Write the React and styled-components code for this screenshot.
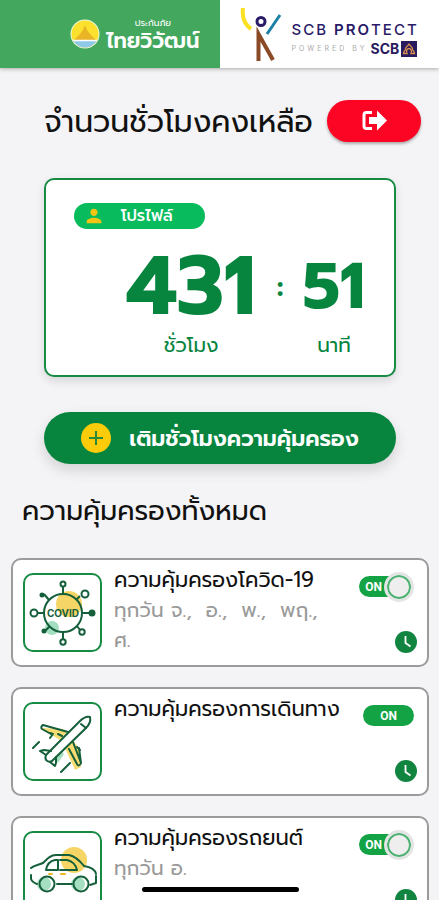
import React, { useState } from 'react';
import styled, { createGlobalStyle } from 'styled-components';
import { MdPerson } from 'react-icons/md';

const policies = [
  { id: 'covid', title: 'ความคุ้มครองโควิด-19', days: ['ทุกวัน จ.,', 'อ.,', 'พ.,', 'พฤ.,', 'ศ.'], knob: true },
  { id: 'travel', title: 'ความคุ้มครองการเดินทาง', days: [], knob: false },
  { id: 'car', title: 'ความคุ้มครองรถยนต์', days: ['ทุกวัน อ.'], knob: true },
];

const SunLogo = () => (
  <svg width="30" height="30" viewBox="0 0 30 30" aria-hidden="true">
    <clipPath id="sun"><circle cx="15" cy="15" r="13.5" /></clipPath>
    <circle cx="15" cy="15" r="14.5" fill="#e9f6dc" />
    <g clipPath="url(#sun)">
      <rect width="30" height="30" fill="#fbe02e" />
      <path d="M15 6l2 5 3 4 7 7H3l7-7 3-4z" fill="#e9b526" />
      <rect y="21.5" width="30" height="9" fill="#8fc9ea" />
      <path d="M0 21.5h30" stroke="#fff" strokeWidth="1.5" />
    </g>
  </svg>
);

const ProtectLogo = () => (
  <svg width="42" height="56" viewBox="0 0 42 56" fill="none" aria-hidden="true">
    <path d="M3 2c-1 8 1 16 8 21" stroke="#fbe122" strokeWidth="4" />
    <circle cx="21" cy="15.5" r="4" stroke="#2a1a68" strokeWidth="3" />
    <path d="M40 9L27 28" stroke="#1b7fa6" strokeWidth="3" />
    <path d="M18.500 55V28L33 54" stroke="#8a4a26" strokeWidth="4" />
  </svg>
);

const ScbMark = () => (
  <svg width="16" height="16" viewBox="0 0 16 16" fill="none" aria-hidden="true">
    <rect width="16" height="16" fill="#2a1a5e" />
    <path d="M8 2.500C8 5 4.500 5 4.500 8c0 2-2 2-2 4.500h3.500c-1-3 0-5 2-5s3 2 2 5h3.500c0-2.500-2-2.500-2-4.500 0-3-3.500-3-3.500-5.500z" stroke="#d98f4e" strokeWidth="1.300" />
  </svg>
);

const LogoutIcon = () => (
  <svg width="28" height="24" viewBox="0 0 28 24" fill="none" aria-hidden="true">
    <path d="M12 3.500H6.500C5 3.500 4 4.500 4 6v11c0 1.500 1 2.500 2.500 2.500H12" stroke="#fff" strokeWidth="3" />
    <path d="M9 8h8V1.500L27 11.500l-10 10V15H9z" fill="#fff" />
  </svg>
);

const ClockIcon = () => (
  <svg width="22" height="22" viewBox="0 0 22 22" fill="none" aria-hidden="true">
    <circle cx="11" cy="11" r="11" fill="#118540" />
    <path d="M10.500 5v7l5 3.500" stroke="#fff" strokeWidth="1.800" />
  </svg>
);

const PlusIcon = () => (
  <svg width="30" height="30" viewBox="0 0 30 30" fill="none" aria-hidden="true">
    <circle cx="15" cy="15" r="15" fill="#fccb0a" />
    <path d="M15 8v14M8 15h14" stroke="#2c8a36" strokeWidth="2" />
  </svg>
);

const CovidIcon = () => (
  <svg width="75" height="75" viewBox="0 0 75 75" fill="none" stroke="#155f3b" strokeWidth="2">
    <circle cx="44" cy="29" r="13" fill="#f5d565" stroke="none" />
    <circle cx="27" cy="53" r="7" fill="#a5dfc2" stroke="none" />
    <circle cx="38" cy="38" r="19" />
    <path d="M38 19v-7M38 57v7M19 38h-6M57 38h7M24 25l-5-6M51 25l4-4M25 51l-5 5M52 51l3 4" />
    <circle cx="38" cy="9" r="2.500" />
    <circle cx="38" cy="67" r="2.700" />
    <circle cx="9" cy="38" r="3.500" />
    <circle cx="60" cy="19" r="3.500" />
    <circle cx="57" cy="57" r="2.700" />
    <circle cx="67" cy="38" r="2.500" fill="#155f3b" />
    <circle cx="17" cy="20" r="1.500" fill="#155f3b" />
    <circle cx="19" cy="56" r="1.500" fill="#155f3b" />
    <text x="38" y="42" textAnchor="middle" fontFamily="Inter, sans-serif" fontSize="10" fontWeight="700" fill="#155f3b" stroke="none">COVID</text>
  </svg>
);

const PlaneIcon = () => (
  <svg width="75" height="75" viewBox="0 0 75 75" fill="none" stroke="#155f3b" strokeWidth="2" strokeLinejoin="round" strokeLinecap="round">
    <path d="M15 24l20 12 7-8-4-3zM40 44l10 22 6-3-2-18-6-9z" fill="#f8dc72" stroke="none" />
    <path d="M29 53l7-6 3 3-6 9z" fill="#a5dfc2" stroke="none" />
    <path d="M21 51l34-34c3-3 7-5 10-4 1 4-1 8-4 11L27 57c-4 2-8-1-6-6z" fill="#fff" />
    <path d="M43 28L18 21c-2 1-2 3-1 4l9 5M48 38l8 21c-1 3-3 3-4 1l-8-15M54 44l2 15" />
    <path d="M21 51l-6-4 4-1 7 1M25 58l5 4 1-3 0-6M56 20l5 4M25 29l3 1-3 4M33 30l4 2M52 43l3 3" />
    <path d="M8 44l6-6M36 68l9-9" />
  </svg>
);

const CarIcon = () => (
  <svg width="75" height="75" viewBox="0 0 75 75" fill="none" stroke="#155f3b" strokeWidth="2" strokeLinejoin="round" strokeLinecap="round">
    <circle cx="49" cy="27" r="13" fill="#f5d565" stroke="none" />
    <circle cx="19" cy="51" r="7" fill="#a5dfc2" stroke="none" />
    <circle cx="53" cy="51" r="7" fill="#a5dfc2" stroke="none" />
    <path d="M6 35c3-3 8-3 12-5 5-5 8-8 13-8h13c5 1 11 6 15 11 7 1 11 3 12 8M6 42v4c1 3 3 4 6 5M71 43v7l-6 2M32 51h15" />
    <path d="M21 37c1-6 4-9 9-10h3v10H21zM35 27h7c5 1 9 5 10 10H35" />
    <circle cx="22" cy="51" r="7.500" />
    <circle cx="56" cy="51" r="7.500" />
    <path d="M24 41h3M36 41h4" stroke="#e6b925" />
  </svg>
);

const icons = { covid: CovidIcon, travel: PlaneIcon, car: CarIcon };

const PolicyCard = ({ policy }) => {
  const [active, setActive] = useState(true);
  const Icon = icons[policy.id];

  return (
    <Card>
      <Thumb><Icon /></Thumb>
      <CardText>
        <CardTitle>{policy.title}</CardTitle>
        {policy.days.length > 0 && (
          <Days>
            {policy.days.map((day) => <span key={day}>{day}</span>)}
          </Days>
        )}
      </CardText>
      <CardActions>
        <Toggle $knob={policy.knob} $active={active}>
          {active ? 'ON' : 'OFF'}
          <ToggleInput
            type="checkbox"
            role="switch"
            $knob={policy.knob}
            aria-label={policy.title}
            checked={active}
            onChange={(e) => setActive(e.target.checked)}
          />
        </Toggle>
        <ClockButton type="button" aria-label="ตั้งเวลา"><ClockIcon /></ClockButton>
      </CardActions>
    </Card>
  );
};

const App = () => (
  <>
    <GlobalStyle />
    <Screen>
      <Header>
        <BrandGreen>
          <SunLogo />
          <BrandName>
            <BrandSmall>ประกันภัย</BrandSmall>
            <BrandLarge>ไทยวิวัฒน์</BrandLarge>
          </BrandName>
        </BrandGreen>
        <BrandWhite>
          <ProtectLogo />
          <ProtectText>
            <ProtectName>SCB <b>PRO</b>TECT</ProtectName>
            <PoweredBy>
              POWERED BY
              <ScbName>SCB<ScbMark /></ScbName>
            </PoweredBy>
          </ProtectText>
        </BrandWhite>
      </Header>

      <main>
        <TitleRow>
          <PageTitle>จำนวนชั่วโมงคงเหลือ</PageTitle>
          <LogoutButton type="button" aria-label="ออกจากระบบ"><LogoutIcon /></LogoutButton>
        </TitleRow>

        <BalanceCard>
          <ProfileButton type="button">
            <MdPerson size={22} color="#f2c414" />
            <span>โปรไฟล์</span>
          </ProfileButton>
          <Balance>
            <Amount>431</Amount>
            <Colon>:</Colon>
            <Amount $small>51</Amount>
            <Unit>ชั่วโมง</Unit>
            <span />
            <Unit>นาที</Unit>
          </Balance>
        </BalanceCard>

        <TopUpButton type="button">
          <PlusIcon />
          เติมชั่วโมงความคุ้มครอง
        </TopUpButton>

        <SectionTitle>ความคุ้มครองทั้งหมด</SectionTitle>
        <CardList>
          {policies.map((policy) => <PolicyCard key={policy.id} policy={policy} />)}
        </CardList>
      </main>
      <HomeIndicator />
    </Screen>
  </>
);

const GlobalStyle = createGlobalStyle`
  * {
    box-sizing: border-box;
  }

  html {
    scrollbar-width: none;
  }

  body {
    margin: 0;
    background: #f4f4f6;
    color: #111;
    font-family: Prompt, Kanit, "Noto Sans", "Noto Sans Thai", sans-serif;
  }

  button {
    border: none;
    padding: 0;
    font-family: inherit;
    cursor: pointer;
  }
`;

const Screen = styled.div`
  min-height: 100vh;
  padding-bottom: 24px;
`;

const Header = styled.header`
  display: flex;
  height: 68px;
  box-shadow: 0 1px 4px rgba(0, 0, 0, 0.3);
`;

const BrandGreen = styled.div`
  flex: 1;
  display: flex;
  align-items: center;
  justify-content: flex-end;
  gap: 6px;
  padding-right: 20px;
  background: #43a85e;
  color: #fff;
`;

const BrandName = styled.div`
  display: flex;
  flex-direction: column;
  align-items: center;
  padding-top: 4px;
`;

const BrandSmall = styled.span`
  font-size: 9px;
  line-height: 9px;
`;

const BrandLarge = styled.span`
  font-size: 21px;
  line-height: 26px;
  font-weight: 600;
`;

const BrandWhite = styled.div`
  flex: 1;
  display: flex;
  align-items: center;
  gap: 10px;
  padding-left: 20px;
  background: #fff;
  color: #2a1a68;
  font-family: Inter, sans-serif;
  white-space: nowrap;
`;

const ProtectText = styled.div`
  padding-top: 10px;
`;

const ProtectName = styled.div`
  font-size: 15px;
  line-height: 20px;
  font-weight: 500;
  letter-spacing: 2px;

  b {
    font-weight: 600;
  }
`;

const PoweredBy = styled.div`
  display: flex;
  align-items: center;
  gap: 3px;
  font-size: 7px;
  line-height: 18px;
  letter-spacing: 3px;
  color: #aaa;
`;

const ScbName = styled.strong`
  display: flex;
  align-items: center;
  gap: 2px;
  font-size: 14px;
  letter-spacing: 0;
  color: #2a1a5e;
`;

const TitleRow = styled.div`
  display: flex;
  align-items: center;
  justify-content: space-between;
  padding: 32px 18px 0 44px;
`;

const PageTitle = styled.h1`
  margin: 0;
  padding-top: 2px;
  font-size: 30px;
  line-height: 40px;
  font-weight: 400;
  white-space: nowrap;
`;

const LogoutButton = styled.button`
  display: flex;
  align-items: center;
  justify-content: center;
  flex: none;
  width: 94px;
  height: 42px;
  border-radius: 21px;
  background: #fc0424;
  box-shadow: 0 2px 3px rgba(0, 0, 0, 0.3);
`;

const BalanceCard = styled.section`
  margin: 36px 43px 0 44px;
  padding: 23px 24px 14px 28px;
  border: 2px solid #178a43;
  border-radius: 10px;
  background: #fff;
  box-shadow: 0 4px 10px rgba(0, 0, 0, 0.12);
`;

const ProfileButton = styled.button`
  display: flex;
  align-items: center;
  gap: 16px;
  width: 131px;
  height: 26px;
  padding-left: 9px;
  border-radius: 13px;
  background: #08bc5e;
  color: #fff;
  font-size: 16px;
  line-height: 26px;
  font-weight: 500;
`;

const Balance = styled.div`
  display: grid;
  grid-template-columns: 142px 16px 72px;
  justify-content: end;
  column-gap: 10px;
  justify-items: center;
  align-items: center;
  color: #07853f;
`;

const Amount = styled.span`
  padding-top: 15px;
  font-size: ${props => props.$small ? '64px' : '82px'};
  line-height: 86px;
  font-weight: 700;
`;

const Colon = styled.span`
  padding-top: 14px;
  font-size: 28px;
  font-weight: 700;
`;

const Unit = styled.span`
  font-size: 20px;
  line-height: 31px;
`;

const TopUpButton = styled.button`
  display: flex;
  align-items: center;
  justify-content: center;
  gap: 18px;
  width: calc(100% - 87px);
  height: 52px;
  margin: 35px 43px 0 44px;
  border-radius: 26px;
  background: #07853f;
  color: #fff;
  font-size: 22px;
  font-weight: 600;
  box-shadow: 0 6px 14px rgba(0, 0, 0, 0.14);
`;

const SectionTitle = styled.h2`
  margin: 27px 22px;
  font-size: 27px;
  line-height: 40px;
  font-weight: 400;
`;

const CardList = styled.div`
  display: flex;
  flex-direction: column;
  gap: 20px;
  padding: 0 10px 0 11px;
`;

const Card = styled.article`
  display: flex;
  min-height: 109px;
  padding: 13px 10px 10px;
  border: 2px solid #9b9b9b;
  border-radius: 10px;
  background: #fff;
`;

const Thumb = styled.div`
  flex: none;
  width: 79px;
  height: 79px;
  border: 2px solid #178a43;
  border-radius: 10px;
`;

const CardText = styled.div`
  flex: 1;
  min-width: 0;
  margin: -8px 0 0 12px;
`;

const CardTitle = styled.h3`
  margin: 0;
  font-size: 21px;
  line-height: 30px;
  font-weight: 400;
  white-space: nowrap;
`;

const Days = styled.p`
  display: flex;
  flex-wrap: wrap;
  column-gap: 14px;
  max-width: 220px;
  margin: 0;
  font-size: 20px;
  line-height: 30px;
  color: #999;
`;

const CardActions = styled.div`
  display: flex;
  flex: none;
  flex-direction: column;
  align-items: flex-end;
  justify-content: space-between;
  padding-bottom: 2px;
`;

const Toggle = styled.label`
  display: flex;
  align-items: center;
  justify-content: ${props => props.$knob ? 'flex-end' : 'center'};
  width: 51px;
  height: 21px;
  margin: ${props => props.$knob ? '3px 7px 0 0' : '3px 3px 0 0'};
  border-radius: 11px;
  background: ${props => props.$active ? '#14a344' : '#9b9b9b'};
  color: #fff;
  font-family: Roboto, sans-serif;
  font-size: 12px;
  font-weight: 700;
  cursor: pointer;
`;

const ToggleInput = styled.input`
  appearance: none;
  flex: none;
  width: ${props => props.$knob ? '30px' : '0'};
  height: ${props => props.$knob ? '30px' : '0'};
  margin: ${props => props.$knob ? '0 -4px 0 2px' : '0'};
  border: ${props => props.$knob ? '3px solid #e2e5e3' : 'none'};
  border-radius: 50%;
  background: #eee;
  box-shadow: ${props => props.$knob ? 'inset 0 0 0 2px #4cb272' : 'none'};
  cursor: pointer;
`;

const ClockButton = styled.button`
  display: flex;
  background: none;
`;

const HomeIndicator = styled.div`
  position: fixed;
  bottom: 8px;
  left: 50%;
  width: 157px;
  height: 5px;
  margin-left: -78px;
  border-radius: 3px;
  background: #000;
`;

export default App;
